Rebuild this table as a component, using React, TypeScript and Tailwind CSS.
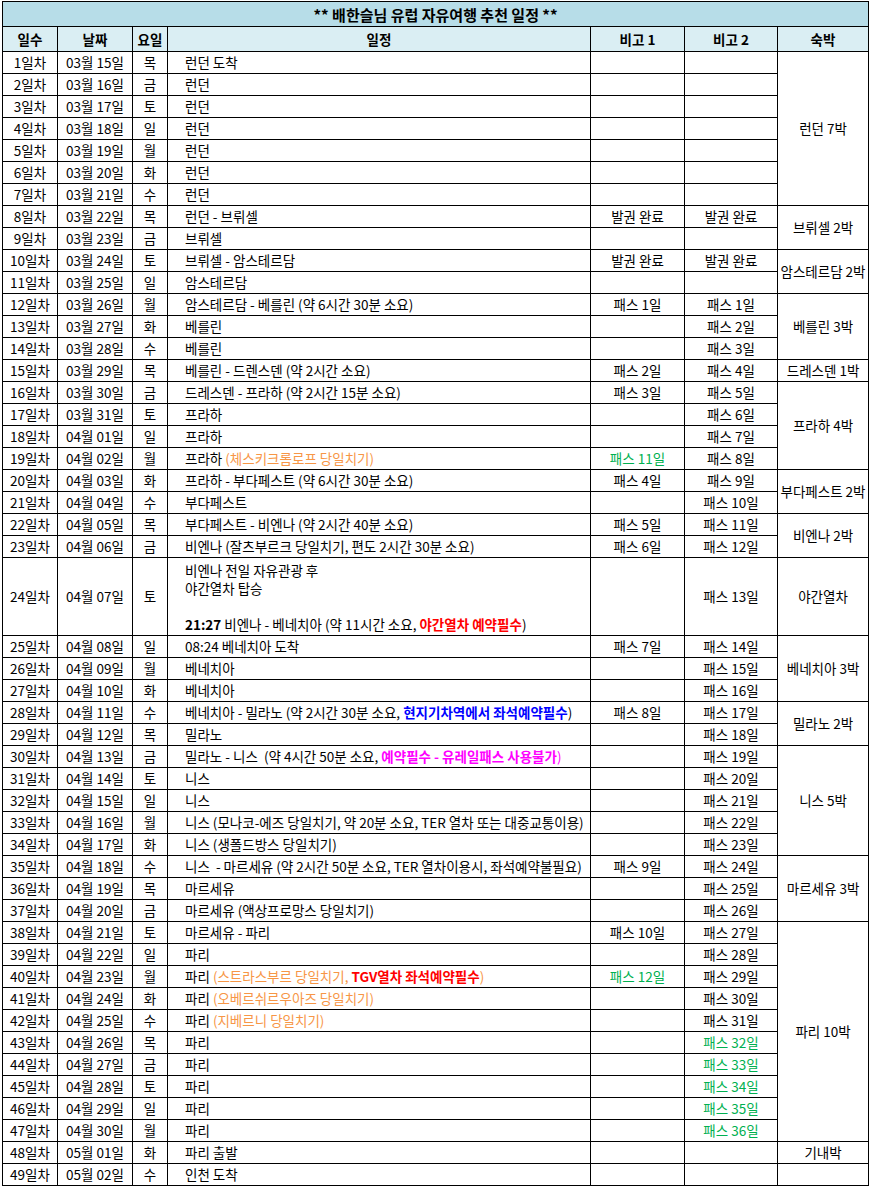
import type { ReactNode } from "react";

type Row = {
  day: number;
  date: string;
  dow: string;
  plan: ReactNode;
  b1?: string;
  b1Green?: boolean;
  tall?: boolean;
};

const orange = "text-[#f79646]";

const rows: Row[] = [
  { day: 1, date: "03월 15일", dow: "목", plan: "런던 도착" },
  { day: 2, date: "03월 16일", dow: "금", plan: "런던" },
  { day: 3, date: "03월 17일", dow: "토", plan: "런던" },
  { day: 4, date: "03월 18일", dow: "일", plan: "런던" },
  { day: 5, date: "03월 19일", dow: "월", plan: "런던" },
  { day: 6, date: "03월 20일", dow: "화", plan: "런던" },
  { day: 7, date: "03월 21일", dow: "수", plan: "런던" },
  { day: 8, date: "03월 22일", dow: "목", plan: "런던 - 브뤼셀", b1: "발권 완료" },
  { day: 9, date: "03월 23일", dow: "금", plan: "브뤼셀" },
  { day: 10, date: "03월 24일", dow: "토", plan: "브뤼셀 - 암스테르담", b1: "발권 완료" },
  { day: 11, date: "03월 25일", dow: "일", plan: "암스테르담" },
  { day: 12, date: "03월 26일", dow: "월", plan: "암스테르담 - 베를린 (약 6시간 30분 소요)", b1: "패스 1일" },
  { day: 13, date: "03월 27일", dow: "화", plan: "베를린" },
  { day: 14, date: "03월 28일", dow: "수", plan: "베를린" },
  { day: 15, date: "03월 29일", dow: "목", plan: "베를린 - 드렌스덴 (약 2시간 소요)", b1: "패스 2일" },
  { day: 16, date: "03월 30일", dow: "금", plan: "드레스덴 - 프라하 (약 2시간 15분 소요)", b1: "패스 3일" },
  { day: 17, date: "03월 31일", dow: "토", plan: "프라하" },
  { day: 18, date: "04월 01일", dow: "일", plan: "프라하" },
  {
    day: 19,
    date: "04월 02일",
    dow: "월",
    plan: (
      <>
        프라하 <span className={orange}>(체스키크롬로프 당일치기)</span>
      </>
    ),
    b1: "패스 11일",
    b1Green: true,
  },
  { day: 20, date: "04월 03일", dow: "화", plan: "프라하 - 부다페스트 (약 6시간 30분 소요)", b1: "패스 4일" },
  { day: 21, date: "04월 04일", dow: "수", plan: "부다페스트" },
  { day: 22, date: "04월 05일", dow: "목", plan: "부다페스트 - 비엔나 (약 2시간 40분 소요)", b1: "패스 5일" },
  { day: 23, date: "04월 06일", dow: "금", plan: "비엔나 (잘츠부르크 당일치기, 편도 2시간 30분 소요)", b1: "패스 6일" },
  {
    day: 24,
    date: "04월 07일",
    dow: "토",
    tall: true,
    plan: (
      <div className="leading-[18px]">
        <div>비엔나 전일 자유관광 후</div>
        <div>야간열차 탑승</div>
        <div>&nbsp;</div>
        <div>
          <b>21:27</b> 비엔나 - 베네치아 (약 11시간 소요,{" "}
          <b className="text-[#ff0000]">야간열차 예약필수</b>)
        </div>
      </div>
    ),
  },
  { day: 25, date: "04월 08일", dow: "일", plan: "08:24 베네치아 도착", b1: "패스 7일" },
  { day: 26, date: "04월 09일", dow: "월", plan: "베네치아" },
  { day: 27, date: "04월 10일", dow: "화", plan: "베네치아" },
  {
    day: 28,
    date: "04월 11일",
    dow: "수",
    plan: (
      <>
        베네치아 - 밀라노 (약 2시간 30분 소요,{" "}
        <b className="text-[#0000ff]">현지기차역에서 좌석예약필수</b>)
      </>
    ),
    b1: "패스 8일",
  },
  { day: 29, date: "04월 12일", dow: "목", plan: "밀라노" },
  {
    day: 30,
    date: "04월 13일",
    dow: "금",
    plan: (
      <>
        {"밀라노 - 니스  (약 4시간 50분 소요, "}
        <b className="text-[#ff00ff]">예약필수 - 유레일패스 사용불가</b>
        <span className="text-[#ff00ff]">)</span>
      </>
    ),
  },
  { day: 31, date: "04월 14일", dow: "토", plan: "니스" },
  { day: 32, date: "04월 15일", dow: "일", plan: "니스" },
  { day: 33, date: "04월 16일", dow: "월", plan: "니스 (모나코-에즈 당일치기, 약 20분 소요, TER 열차 또는 대중교통이용)" },
  { day: 34, date: "04월 17일", dow: "화", plan: "니스 (생폴드방스 당일치기)" },
  { day: 35, date: "04월 18일", dow: "수", plan: "니스  - 마르세유 (약 2시간 50분 소요, TER 열차이용시, 좌석예약불필요)", b1: "패스 9일" },
  { day: 36, date: "04월 19일", dow: "목", plan: "마르세유" },
  { day: 37, date: "04월 20일", dow: "금", plan: "마르세유 (액상프로망스 당일치기)" },
  { day: 38, date: "04월 21일", dow: "토", plan: "마르세유 - 파리", b1: "패스 10일" },
  { day: 39, date: "04월 22일", dow: "일", plan: "파리" },
  {
    day: 40,
    date: "04월 23일",
    dow: "월",
    plan: (
      <>
        파리 <span className={orange}>(스트라스부르 당일치기, </span>
        <b className="text-[#ff0000]">TGV열차 좌석예약필수</b>
        <span className={orange}>)</span>
      </>
    ),
    b1: "패스 12일",
    b1Green: true,
  },
  {
    day: 41,
    date: "04월 24일",
    dow: "화",
    plan: (
      <>
        파리 <span className={orange}>(오베르쉬르우아즈 당일치기)</span>
      </>
    ),
  },
  {
    day: 42,
    date: "04월 25일",
    dow: "수",
    plan: (
      <>
        파리 <span className={orange}>(지베르니 당일치기)</span>
      </>
    ),
  },
  { day: 43, date: "04월 26일", dow: "목", plan: "파리" },
  { day: 44, date: "04월 27일", dow: "금", plan: "파리" },
  { day: 45, date: "04월 28일", dow: "토", plan: "파리" },
  { day: 46, date: "04월 29일", dow: "일", plan: "파리" },
  { day: 47, date: "04월 30일", dow: "월", plan: "파리" },
  { day: 48, date: "05월 01일", dow: "화", plan: "파리 출발" },
  { day: 49, date: "05월 02일", dow: "수", plan: "인천 도착" },
];

// 숙박 column, keyed by the first day of each merged block
const stays: Record<number, { name: string; span: number }> = {
  1: { name: "런던 7박", span: 7 },
  8: { name: "브뤼셀 2박", span: 2 },
  10: { name: "암스테르담 2박", span: 2 },
  12: { name: "베를린 3박", span: 3 },
  15: { name: "드레스덴 1박", span: 1 },
  16: { name: "프라하 4박", span: 4 },
  20: { name: "부다페스트 2박", span: 2 },
  22: { name: "비엔나 2박", span: 2 },
  24: { name: "야간열차", span: 1 },
  25: { name: "베네치아 3박", span: 3 },
  28: { name: "밀라노 2박", span: 2 },
  30: { name: "니스 5박", span: 5 },
  35: { name: "마르세유 3박", span: 3 },
  38: { name: "파리 10박", span: 10 },
  48: { name: "기내박", span: 1 },
  49: { name: "", span: 1 },
};

function bigo2(day: number, b1: string | undefined) {
  if (day === 8 || day === 10) return b1;
  if (day >= 12 && day <= 47) return `패스 ${day - 11}일`;
  return "";
}

const cell = "border border-black p-0 text-center align-middle";

export default function App() {
  return (
    <div className="min-h-screen bg-white font-['Noto_Sans_CJK_KR','Noto_Sans',sans-serif] text-[13.5px] leading-[17px] text-black">
      <table className="ml-[2px] mt-[1px] w-[866px] table-fixed border-collapse">
        <colgroup>
          <col className="w-[55px]" />
          <col className="w-[75px]" />
          <col className="w-[35px]" />
          <col className="w-[423px]" />
          <col className="w-[94px]" />
          <col className="w-[93px]" />
          <col className="w-[91px]" />
        </colgroup>
        <thead>
          <tr className="h-[25px]">
            <th colSpan={7} className={`${cell} bg-[#b7dde8] text-[15px] font-bold`}>
              ** 배한슬님 유럽 자유여행 추천 일정 **
            </th>
          </tr>
          <tr className="h-[25px] bg-[#daeef3] font-bold">
            <th className={cell}>일수</th>
            <th className={cell}>날짜</th>
            <th className={cell}>요일</th>
            <th className={cell}>일정</th>
            <th className={cell}>비고 1</th>
            <th className={cell}>비고 2</th>
            <th className={cell}>숙박</th>
          </tr>
        </thead>
        <tbody>
          {rows.map((r) => {
            const stay = stays[r.day];
            const b2 = bigo2(r.day, r.b1);
            return (
              <tr key={r.day} className={r.tall ? "h-[78px]" : "h-[22px]"}>
                <td className={cell}>{r.day}일차</td>
                <td className={cell}>{r.date}</td>
                <td className={cell}>{r.dow}</td>
                <td className={`${cell} whitespace-pre pl-[17px] text-left`}>{r.plan}</td>
                <td className={`${cell} ${r.b1Green ? "text-[#00b050]" : ""}`}>{r.b1}</td>
                <td className={`${cell} ${r.day >= 43 && r.day <= 47 ? "text-[#00b050]" : ""}`}>{b2}</td>
                {stay && (
                  <td rowSpan={stay.span} className={cell}>
                    {stay.name}
                  </td>
                )}
              </tr>
            );
          })}
        </tbody>
      </table>
    </div>
  );
}
